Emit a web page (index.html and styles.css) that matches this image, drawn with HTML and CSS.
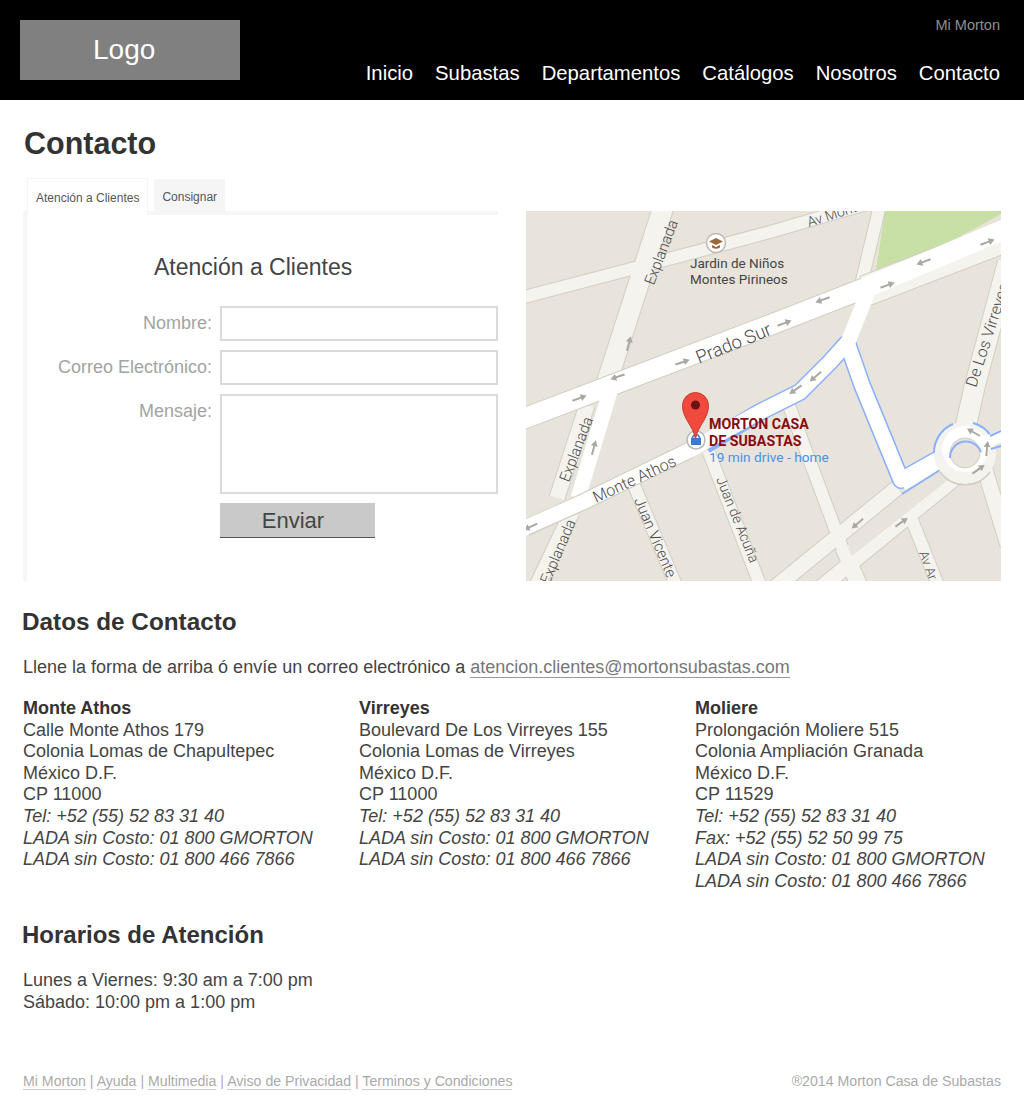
FILE: index.html
```html
<!DOCTYPE html>
<html lang="es">
<head>
<meta charset="utf-8">
<title>Contacto - Morton Casa de Subastas</title>
<link rel="stylesheet" href="styles.css">
</head>
<body>
<header class="site-header">
  <a class="logo">Logo</a>
  <div class="header-right">
    <a class="account">Mi Morton</a>
    <nav class="main-nav">
      <a>Inicio</a><a>Subastas</a><a>Departamentos</a><a>Catálogos</a><a>Nosotros</a><a>Contacto</a>
    </nav>
  </div>
</header>
<main class="content">
  <h1 class="page-title">Contacto</h1>
  <div class="top-row">
    <section class="form-col">
      <div class="tabs">
        <a class="tab tab-active">Atención a Clientes</a>
        <a class="tab">Consignar</a>
      </div>
      <div class="panel">
        <h3 class="panel-title">Atención a Clientes</h3>
        <form class="contact-form">
          <label class="field-label">Nombre:</label>
          <input class="field" type="text">
          <label class="field-label">Correo Electrónico:</label>
          <input class="field" type="text">
          <label class="field-label">Mensaje:</label>
          <textarea class="field field-area"></textarea>
          <button class="send" type="button">Enviar</button>
        </form>
      </div>
    </section>
    <div class="map">
      <svg class="map-svg" width="475" height="370" viewBox="526 211 475 370" xmlns="http://www.w3.org/2000/svg">
        <defs>
          <g id="minor12">
            <path d="M520 298L635 268L770 232L870 203"/>
            <path d="M634 485L678 590"/>
            <path d="M708 450L762 590"/>
            <path d="M787 400L858 590"/>
            <path d="M910 515L940 590"/>
            <path d="M880 205L861 285"/>
          </g>
          <g id="minor15">
            <path d="M587 405L557 498"/>
            <path d="M572 512L535 590"/>
            <path d="M897 488L772 590"/>
            <path d="M955 478L818 590"/>
            <path d="M985 470L1008 545"/>
            <path d="M843 548L862 590"/>
          </g>
          <g id="minor20">
            <path d="M664 205L606 385"/>
            <path d="M1008 262L975 385L966 425"/>
          </g>
          <g id="blue">
            <path d="M705 445L760 412L800 392L830 362L848 342"/>
            <path d="M848 345L862 385L901 480L940 458"/>
          </g>
          <g id="arrow"><path d="M-8 -1H1V-3.500L7 0L1 3.500V1H-8Z"/></g>
        </defs>
        <rect class="land" x="526" y="211" width="475" height="370"/>
        <path class="park" d="M885 211H1001V214Q940 250 876 270Z"/>

        <use href="#minor12" class="case c12"/>
        <use href="#minor15" class="case c15"/>
        <use href="#minor20" class="case c20"/>
        <use href="#minor12" class="cream w12"/>
        <use href="#minor15" class="cream w15"/>
        <use href="#minor20" class="cream w20"/>
        <polygon class="land" points="946,472 848,548 852,556 953,476"/>

        <path class="case c34" d="M865 291L1008 236"/>
        <path class="cream w30" d="M865 291L1008 236"/>
        <path class="case c22" d="M520 420L620 382L770 325L865 288"/>
        <path class="white w20" d="M520 420L620 382L770 325L865 288L1008 228"/>
        <path class="white w15" d="M612 385L578 498"/>

        <use href="#blue" class="blueline b18"/>
        <path class="case c15" d="M526 528L583 502L690 450"/>
        <path class="white w15" d="M520 530L583 502L690 450"/>
        <path class="white w15" d="M690 450L760 412L800 392L830 362L848 342L868 292"/>
        <path class="white w15" d="M848 345L862 385L901 480L940 458"/>
        <path class="white w18" d="M901 482L945 458"/>
        <path class="blueline b2" d="M902 494L940 470"/>

        <circle class="cream-disc" cx="965" cy="453" r="31"/>
        <path class="ring" d="M940 472A31 31 0 0 0 990 472"/>
        <circle class="white-ring" cx="965" cy="449" r="23"/>
        <path class="blueline b2" d="M934 453A31 31 0 0 1 953 424"/>
        <path class="blueline b2" d="M973 423A31 31 0 0 1 991 436"/>
        <path class="white w12" d="M975 447L1008 433"/>
        <path class="blueline b2" d="M990 436L1001 431M991 449L1001 446"/>
        <circle class="island" cx="965" cy="453" r="15"/>
        <path class="blueline b2" d="M950 458A16 16 0 0 1 981 452"/>

        <g class="arrows">
          <use href="#arrow" transform="translate(785 323) rotate(-20)"/>
          <use href="#arrow" transform="translate(822 300) rotate(160)"/>
          <use href="#arrow" transform="translate(888 285) rotate(-20)"/>
          <use href="#arrow" transform="translate(923 262) rotate(160)"/>
          <use href="#arrow" transform="translate(988 242) rotate(-20)"/>
          <use href="#arrow" transform="translate(683 362) rotate(-18)"/>
          <use href="#arrow" transform="translate(617 377) rotate(162)"/>
          <use href="#arrow" transform="translate(629 343) rotate(-75)"/>
          <use href="#arrow" transform="translate(580 398) rotate(-20)"/>
          <use href="#arrow" transform="translate(594 447) rotate(-75)"/>
          <use href="#arrow" transform="translate(530 527) rotate(155)"/>
          <use href="#arrow" transform="translate(815 377) rotate(140)"/>
          <use href="#arrow" transform="translate(795 390) rotate(145)"/>
          <use href="#arrow" transform="translate(857 524) rotate(140)"/>
          <use href="#arrow" transform="translate(902 522) rotate(-35)"/>
          <use href="#arrow" transform="translate(973 432) rotate(-150)"/>
          <use href="#arrow" transform="translate(987 448) rotate(-85)"/>
          <use href="#arrow" transform="translate(979 469) rotate(-35)"/>
        </g>

        <text class="road-label t15" text-anchor="middle" transform="translate(666 254) rotate(-69)">Explanada</text>
        <text class="road-label t15" text-anchor="middle" transform="translate(581 451) rotate(-69)">Explanada</text>
        <text class="road-label t15" text-anchor="end" transform="translate(576 522) rotate(-67)">Explanada</text>
        <text class="road-label t14" transform="translate(809 227) rotate(-18)">Av Montes</text>
        <text class="road-label t18" transform="translate(699 364) rotate(-22)">Prado Sur</text>
        <text class="road-label t16" transform="translate(596 503) rotate(-25)">Monte Athos</text>
        <text class="road-label t15" transform="translate(634 500) rotate(67)">Juan Vicente</text>
        <text class="road-label t14" transform="translate(716 479) rotate(68)">Juan de Acuña</text>
        <text class="road-label t16" transform="translate(976 388) rotate(-72)">De Los Virreyes</text>
        <text class="road-label t13" transform="translate(919 553) rotate(70)">Av Ar</text>

        <circle class="poi-ring" cx="716" cy="243" r="9.500"/>
        <path class="poi-cap" d="M716 238L723 241.500L716 245L709 241.500Z"/>
        <path class="poi-cap" d="M712 245V247.500Q716 250 720 247.500V245L716 247Z"/>
        <text class="poi-text"><tspan x="690" y="268">Jardin de Niños</tspan><tspan x="690" y="284">Montes Pirineos</tspan></text>

        <circle class="place-ring" cx="696" cy="440" r="9"/>
        <path class="place-bag" d="M691 438H701V445H691Z"/>
        <path class="place-flap" d="M692 438L694 435H698L700 438"/>
        <path class="pin" d="M695.500 439C693 425 682.500 419 682.500 405.500A13 13 0 0 1 708.500 405.500C708.500 419 698 425 695.500 439Z"/>
        <circle class="pin-dot" cx="695.500" cy="405" r="4.500"/>
        <text class="place-name"><tspan x="709" y="429">MORTON CASA</tspan><tspan x="709" y="446">DE SUBASTAS</tspan></text>
        <text class="place-route" x="709" y="462">19 min drive - home</text>
      </svg>
    </div>
  </div>

  <h2 class="section-title">Datos de Contacto</h2>
  <p class="intro">Llene la forma de arriba ó envíe un correo electrónico a <a class="mail">atencion.clientes@mortonsubastas.com</a></p>

  <div class="offices">
    <address class="office">
      <strong>Monte Athos</strong>
      <span>Calle Monte Athos 179</span>
      <span>Colonia Lomas de Chapultepec</span>
      <span>México D.F.</span>
      <span>CP 11000</span>
      <em>Tel: +52 (55) 52 83 31 40</em>
      <em>LADA sin Costo: 01 800 GMORTON</em>
      <em>LADA sin Costo: 01 800 466 7866</em>
    </address>
    <address class="office">
      <strong>Virreyes</strong>
      <span>Boulevard De Los Virreyes 155</span>
      <span>Colonia Lomas de Virreyes</span>
      <span>México D.F.</span>
      <span>CP 11000</span>
      <em>Tel: +52 (55) 52 83 31 40</em>
      <em>LADA sin Costo: 01 800 GMORTON</em>
      <em>LADA sin Costo: 01 800 466 7866</em>
    </address>
    <address class="office">
      <strong>Moliere</strong>
      <span>Prolongación Moliere 515</span>
      <span>Colonia Ampliación Granada</span>
      <span>México D.F.</span>
      <span>CP 11529</span>
      <em>Tel: +52 (55) 52 83 31 40</em>
      <em>Fax: +52 (55) 52 50 99 75</em>
      <em>LADA sin Costo: 01 800 GMORTON</em>
      <em>LADA sin Costo: 01 800 466 7866</em>
    </address>
  </div>

  <h2 class="section-title hours-title">Horarios de Atención</h2>
  <p class="hours">Lunes a Viernes: 9:30 am a 7:00 pm<br>Sábado: 10:00 pm a 1:00 pm</p>
</main>
<footer class="site-footer">
  <div class="footer-links">
    <a>Mi Morton</a> | <a>Ayuda</a> | <a>Multimedia</a> | <a>Aviso de Privacidad</a> | <a>Terminos y Condiciones</a>
  </div>
  <div class="copyright">®2014 Morton Casa de Subastas</div>
</footer>
</body>
</html>
```

FILE: styles.css
```css
* { box-sizing: border-box; }
html, body { margin: 0; padding: 0; }
body {
  width: 1024px;
  height: 1120px;
  overflow: hidden;
  background: #fff;
  color: #444;
  font-family: "Liberation Sans", Arial, sans-serif;
  font-size: 18px;
}
.site-header {
  height: 100px;
  background: #000;
  padding: 20px 24px 0 20px;
  display: flex;
  justify-content: space-between;
}
.logo {
  width: 220px;
  height: 60px;
  background: #808080;
  color: #fff;
  font-size: 28px;
  line-height: 60px;
  padding-left: 73px;
}
.header-right {
  display: flex;
  flex-direction: column;
  align-items: flex-end;
}
.account {
  color: #8f8f8f;
  font-size: 14.500px;
  line-height: 16px;
  margin-top: -3px;
}
.main-nav {
  display: flex;
  gap: 22px;
  margin-top: 28px;
  color: #fff;
  font-size: 20.300px;
  line-height: 24px;
}
.content { padding: 0 23px; }
.page-title {
  margin: 25px 0 17px 1px;
  font-size: 30.500px;
  line-height: 36px;
  font-weight: 700;
  color: #333;
}
.top-row {
  display: grid;
  grid-template-columns: 475px 475px;
  gap: 28px;
  height: 403px;
}
.form-col { display: flex; flex-direction: column; }
.tabs {
  display: flex;
  gap: 6px;
  height: 37px;
  padding-left: 4px;
  align-items: flex-start;
  font-size: 12px;
  color: #555;
  position: relative;
  z-index: 1;
}
.tab {
  height: 33px;
  line-height: 37px;
  margin-top: 1px;
  padding: 0 8px;
  background: #f5f5f5;
}
.tab-active {
  height: 37px;
  margin-top: 0;
  line-height: 38px;
  background: #fff;
  border: 1px solid #f5f5f5;
  border-bottom: 0;
}
.panel {
  margin-top: -4px;
  flex: 1;
  border-top: 4px solid #f6f6f6;
  border-left: 4px solid #f6f6f6;
}
.panel-title {
  margin: 37px 0 24px 127px;
  font-size: 23px;
  line-height: 30px;
  font-weight: 400;
  color: #444;
}
.contact-form {
  display: grid;
  grid-template-columns: 185px 278px;
  column-gap: 8px;
  row-gap: 9px;
  align-items: start;
}
.field-label {
  text-align: right;
  color: #a3a3a3;
  line-height: 35px;
}
.field {
  display: block;
  width: 278px;
  height: 35px;
  margin: 0;
  padding: 0;
  border: 2px solid #dadada;
  border-radius: 0;
  background: #fff;
  outline: 0;
  resize: none;
}
.field-area { height: 100px; }
.send {
  grid-column: 2;
  width: 155px;
  height: 35px;
  padding: 2px 9px 0 0;
  border: 0;
  border-bottom: 1px solid #555;
  background: #c9c9c9;
  color: #444;
  font-family: inherit;
  font-size: 22px;
}
.map { width: 475px; height: 370px; margin-top: 33px; overflow: hidden; }
.map-svg { display: block; }
.land { fill: #e8e4dc; }
.park { fill: #c8dfa5; }
.case, .cream, .white, .blueline, .ring { fill: none; stroke-linecap: butt; stroke-linejoin: round; }
.case { stroke: #d2cec3; }
.cream { stroke: #f5f3ed; }
.white { stroke: #fff; }
.blueline { stroke: #8ab0fb; }
.c12 { stroke-width: 14px; }
.c15 { stroke-width: 17px; }
.c20 { stroke-width: 22px; }
.c22 { stroke-width: 22px; }
.c34 { stroke-width: 32px; }
.w12 { stroke-width: 12px; }
.w15 { stroke-width: 15px; }
.w18 { stroke-width: 18px; }
.w20 { stroke-width: 20px; }
.w30 { stroke-width: 30px; }
.b2 { stroke-width: 2px; }
.b18 { stroke-width: 18px; }
.cream-disc { fill: #f5f3ed; }
.ring { stroke: #d2cec3; stroke-width: 1.500px; }
.white-ring { fill: #fff; }
.island { fill: #e8e4dc; stroke: #d2cec3; stroke-width: 1px; }
.arrows { fill: #a9a8a3; }
.road-label { fill: #4a4a4a; font-family: Roboto, sans-serif; font-weight: 300; }
.t13 { font-size: 13px; }
.t14 { font-size: 14px; }
.t15 { font-size: 15px; }
.t16 { font-size: 16px; }
.t18 { font-size: 18.500px; }
.poi-ring { fill: #fff; stroke: #bdbab3; stroke-width: 1.500px; }
.poi-cap { fill: #9a6a3c; }
.poi-text { fill: #444; font-family: Roboto, sans-serif; font-size: 13.500px; }
.place-ring { fill: #fff; stroke: #b8b8b8; stroke-width: 1.500px; }
.place-bag { fill: #3b78d8; }
.place-flap { fill: none; stroke: #3b78d8; stroke-width: 1.500px; }
.pin { fill: #f0493e; stroke: #c93a30; stroke-width: 1px; }
.pin-dot { fill: #6d1412; }
.place-name { fill: #8a0a10; font-family: Roboto, sans-serif; font-size: 14.200px; font-weight: 700; }
.place-route { fill: #4a90e8; font-family: Roboto, sans-serif; font-size: 13.700px; }
.section-title {
  margin: 26px 0 19px -1px;
  font-size: 24.300px;
  line-height: 30px;
  font-weight: 700;
  color: #333;
}
.intro { margin: 0 0 20px; line-height: 22px; }
.mail { color: #777; border-bottom: 1px solid #999; }
.offices {
  display: grid;
  grid-template-columns: 336px 336px 306px;
  height: 195px;
}
.office {
  display: flex;
  flex-direction: column;
  line-height: 21.600px;
  font-style: normal;
}
.office strong { font-weight: 700; color: #333; }
.office em { font-style: italic; }
.section-title.hours-title { margin: 27px 0 19px -1px; font-size: 24px; }
.hours { margin: 0; line-height: 22px; }
.site-footer {
  display: flex;
  justify-content: space-between;
  padding: 0 23px;
  margin-top: 58px;
  font-size: 14.150px;
  line-height: 20px;
  color: #aaa;
}
.footer-links a { border-bottom: 1px solid #ccc; }
```
